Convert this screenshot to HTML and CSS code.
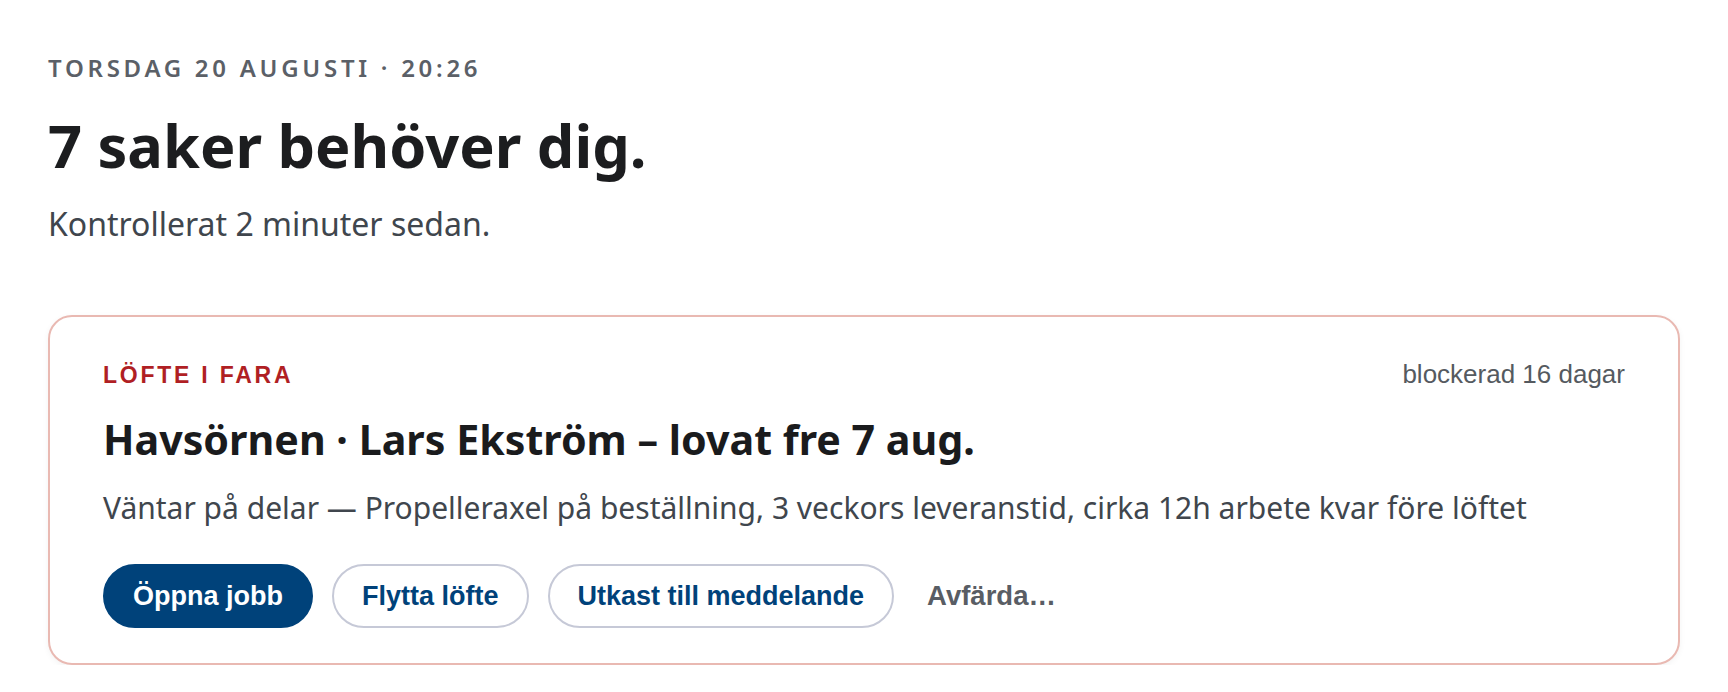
FILE: index.html
```html
<!DOCTYPE html>
<html lang="sv">
<head>
<meta charset="utf-8">
<title>Idag</title>
<link rel="stylesheet" href="styles.css">
</head>
<body>
<main class="page">
  <header class="intro">
    <p class="eyebrow">TORSDAG 20 AUGUSTI · 20:26</p>
    <h1 class="title">7 saker behöver dig.</h1>
    <p class="subtitle">Kontrollerat 2 minuter sedan.</p>
  </header>
  <section class="card">
    <div class="card-head">
      <span class="tag">LÖFTE I FARA</span>
      <span class="meta">blockerad 16 dagar</span>
    </div>
    <h2 class="card-title">Havsörnen · Lars Ekström – lovat fre 7 aug.</h2>
    <p class="card-text">Väntar på delar — Propelleraxel på beställning, 3 veckors leveranstid, cirka 12h arbete kvar före löftet</p>
    <div class="actions">
      <button class="btn btn-primary" type="button">Öppna jobb</button>
      <button class="btn btn-outline" type="button">Flytta löfte</button>
      <button class="btn btn-outline" type="button">Utkast till meddelande</button>
      <button class="btn btn-ghost" type="button">Avfärda…</button>
    </div>
  </section>
</main>
</body>
</html>
```
FILE: styles.css
```css
* { box-sizing: border-box; }
html, body { margin: 0; background: #ffffff; }
body {
  font-family: "Noto Sans", "Open Sans", sans-serif;
  color: #1c1d1f;
}
.page {
  padding: 53px 48px 0 48px;
}
.intro { display: flex; flex-direction: column; }
.eyebrow {
  margin: 0;
  font-size: 24px;
  line-height: 29px;
  font-weight: 600;
  letter-spacing: 0.155em;
  color: #5b6067;
}
.title {
  margin: 28px 0 0 0;
  font-size: 59.5px;
  line-height: 70px;
  font-weight: 700;
  color: #1c1d1f;
}
.subtitle {
  margin: 22px 0 0 0;
  font-size: 32px;
  line-height: 44px;
  color: #40464d;
}
.card {
  margin-top: 69px;
  border: 2px solid #e9b9b2;
  border-radius: 24px;
  padding: 41px 53px 35px 53px;
  box-shadow: 0 2px 6px rgba(0, 0, 0, 0.05);
  background: #fff;
}
.card-head {
  display: flex;
  justify-content: space-between;
  align-items: baseline;
  line-height: 32px;
  font-family: "Liberation Sans", Arial, sans-serif;
}
.tag {
  font-size: 23px;
  font-weight: 700;
  letter-spacing: 0.12em;
  color: #b01f24;
}
.meta {
  font-size: 26px;
  color: #555a60;
}
.card-title {
  margin: 23px 0 0 0;
  font-size: 41.2px;
  line-height: 51px;
  font-weight: 700;
  color: #1a1b1d;
}
.card-text {
  margin: 22px 0 0 0;
  font-size: 30px;
  line-height: 42px;
  color: #40464d;
}
.actions {
  margin-top: 35px;
  display: flex;
  align-items: center;
  gap: 19px;
}
.btn {
  display: inline-flex;
  align-items: center;
  justify-content: center;
  height: 64px;
  padding: 0 28px;
  border: 2px solid transparent;
  border-radius: 32px;
  font-family: "Liberation Sans", Arial, sans-serif;
  font-size: 27px;
  font-weight: 700;
  background: transparent;
  cursor: pointer;
}
.btn-primary {
  background: #00427a;
  border-color: #00427a;
  color: #ffffff;
}
.btn-outline {
  background: #ffffff;
  border-color: #c6c9d7;
  color: #00427a;
}
.btn-ghost {
  padding: 0 12px;
  font-size: 27.5px;
  color: #595d64;
}
```
